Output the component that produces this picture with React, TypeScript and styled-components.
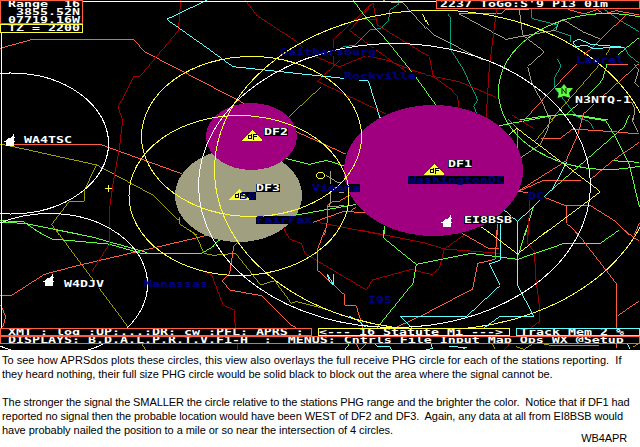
import React from 'react';
import styled, { createGlobalStyle } from 'styled-components';

const Global = createGlobalStyle`
  body { margin: 0; background: #fff; overflow: hidden; }
`;

const C = {
  coral: '#ff5f40',
  maroon: '#9c0000',
  cyan: '#5fffff',
  green: '#5fff40',
  yellow: '#ffff40',
  olive: '#a09f00',
  teal: '#009f80',
  gray: '#a09f80',
  purple: '#a00080',
  navy: '#000080',
  white: '#ffffff',
};
type Ink = keyof typeof C;

const Page = styled.main`
  width: 640px;
  height: 447px;
  display: flex;
  flex-direction: column;
  overflow: hidden;
  background: #fff;
`;

const Screen = styled.section`
  position: relative;
  flex: 0 0 350px;
  display: flex;
  flex-direction: column;
  justify-content: space-between;
  overflow: hidden;
  background: #000;
`;

const MapLayer = styled.svg`
  position: absolute;
  inset: 0;
  display: block;
`;

const TopBar = styled.header`
  position: relative;
  display: flex;
  justify-content: space-between;
  align-items: flex-start;
`;

const Frame = styled.div<{ $ink: Ink; $w?: number; $h: number; $pad?: number }>`
  box-sizing: border-box;
  ${p => (p.$w ? `width: ${p.$w}px;` : 'flex: 1;')}
  height: ${p => p.$h}px;
  padding-left: ${p => p.$pad ?? 0}px;
  border: 1px solid ${p => C[p.$ink]};
  background: #000;
  overflow: hidden;
`;

const Readout = styled.div`
  display: flex;
  flex-direction: column;
`;

const DosText = styled.div`
  height: 8px;
  font: bold 13.29px/8px 'DejaVu Sans Mono', monospace;
  color: #fff;
  white-space: pre;
  transform: translateY(-1px) scaleY(0.72);
  transform-origin: 0 50%;
`;

const BarText = styled(DosText)`
  transform: translateY(-0.4px) scaleY(0.64);
`;

const StatusBars = styled.footer`
  position: relative;
  display: flex;
  flex-direction: column;
  padding-bottom: 6px;
`;

const StatusRow = styled.div`
  display: flex;
  justify-content: space-between;
`;

const Caption = styled.section`
  flex: 1;
  display: flex;
  flex-direction: column;
  padding: 3px 0 0 2px;
  font-family: 'Liberation Sans', Arial, sans-serif;
  font-size: 11px;
  line-height: 14px;
  color: #000;
`;

const Line = styled.div<{ $track: number }>`
  height: 14px;
  white-space: pre;
  letter-spacing: ${p => p.$track}px;
`;

const Signature = styled.div`
  align-self: flex-end;
  margin: -6px 13px 0 0;
  letter-spacing: -0.1px;
`;

/* Roads, rivers and boundaries, by map sector. Points count in thirds of a pixel. */
type Sector = { x: number; y: number; traces: [Ink, string][] };

const sectors: Sector[] = [
  { x: 0, y: 0, traces: [
    ['coral', '0,145 95,119 402,119 433,155 642,263'],
    ['maroon', '542,0 535,92 420,229 402,229 354,322 368,360'],
    ['cyan', '622,0 500,58 640,157'],
  ] },
  { x: 213, y: 0, traces: [
    ['maroon', '97,0 132,47 250,124 270,143'],
    ['maroon', '362,200 362,118 480,8 493,75 640,165'],
    ['maroon', '480,8 410,92 580,215'],
    ['maroon', '425,58 493,58'],
    ['maroon', '300,167 380,200 460,167 520,180 610,215 640,223'],
    ['maroon', '380,182 313,244 520,342'],
    ['teal', '558,0 558,12 530,30 527,60 505,85 470,90 425,135 385,142'],
    ['gray', '510,2 516,2'],
    ['gray', '535,9 570,9 640,87'],
    ['green', '420,0 462,57 520,120 600,220 640,275'],
    ['cyan', '0,157 60,200 466,243 503,360'],
    ['coral', '0,262 95,311'],
    ['olive', '228,350 323,262'],
    ['yellow', '628,42 640,67'],
  ] },
  { x: 426, y: 0, traces: [
    ['teal', '65,42 75,55 75,150 110,205 155,300 143,320 155,345 155,360'],
    ['teal', '317,28 317,55 395,75 380,90 435,108 435,125'],
    ['teal', '395,178 405,200 387,230 387,265 452,350 490,365'],
    ['teal', '535,28 580,60 640,95'],
    ['teal', '595,142 608,165 640,190'],
    ['gray', '225,42 100,42 240,118 390,90 398,65 410,58 470,95 525,118'],
    ['gray', '280,28 290,105 355,155 305,200 318,250 350,310 372,360'],
    ['gray', '225,42 240,28 310,28'],
    ['gray', '0,82 25,105 170,180'],
    ['gray', '625,193 638,210 626,250 640,260'],
    ['gray', '615,305 627,325 622,360'],
    ['maroon', '212,28 190,200 180,360'],
    ['maroon', '0,162 10,170 22,230 75,268 95,290 98,322'],
    ['maroon', '0,225 100,245 210,292'],
    ['yellow', '0,60 8,75'],
    ['coral', '425,28 475,42 515,28 530,42 570,32 640,45'],
    ['coral', '603,42 475,165'],
    ['coral', '452,192 342,308 295,360'],
    ['coral', '542,193 606,195'],
    ['coral', '640,190 472,342 466,360'],
    ['olive', '553,143 540,165'],
    ['olive', '520,195 375,360'],
    ['green', '640,112 575,165'],
    ['green', '543,193 529,240 492,280 422,342'],
    ['cyan', '440,125 460,118 495,133 595,142 500,145 480,135 450,140 440,125'],
    ['green', '280,360 342,350 430,342 545,360'],
    ['green', '0,275 30,315'],
  ] },
  { x: 0, y: 115, traces: [
    ['coral', '40,88 300,88 545,176'],
    ['olive', '0,87 40,95 290,150 462,242 535,315 540,305 540,328 590,360'],
    ['olive', '290,150 253,225 253,259 208,259 155,328 178,360'],
    ['maroon', '364,0 368,15 358,100 340,200 330,270 328,360'],
    ['green', '0,317 70,320 130,360'],
    ['green', '0,322 75,325 240,358'],
    ['yellow', '314,220 337,220'],
    ['yellow', '325,209 325,232'],
  ] },
  { x: 213, y: 115, traces: [
    ['coral', '250,50 400,118'],
    ['green', '218,130 290,148 340,136 400,155'],
    ['green', '250,300 430,268'],
    ['maroon', '320,323 500,358'],
    ['maroon', '212,335 222,360'],
    ['coral', '300,322 390,290 455,292'],
    ['coral', '410,290 430,275'],
    ['coral', '335,360 343,320 343,272 360,260 380,258 410,240'],
    ['gray', '353,167 353,260 347,275 392,272'],
    ['gray', '340,182 375,203 385,203'],
    ['gray', '378,232 392,232'],
    ['green', '515,333 515,360'],
    ['cyan', '497,0 503,8'],
  ] },
  { x: 426, y: 115, traces: [
    ['green', '220,32 390,0'],
    ['green', '440,0 540,18 565,60 610,150 640,275'],
    ['green', '610,0 595,35 380,222'],
    ['green', '560,137 640,142'],
    ['green', '322,275 297,360'],
    ['olive', '390,2 328,78'],
    ['gray', '375,0 365,45 342,90 285,128'],
    ['gray', '622,0 620,20 635,50'],
    ['maroon', '258,0 325,42'],
    ['maroon', '310,255 308,360'],
    ['teal', '455,5 490,20 503,42'],
    ['coral', '275,100 275,42 245,12'],
    ['coral', '345,70 403,70 440,42 560,50 640,57'],
    ['coral', '472,0 455,60 420,138 275,230 350,197 465,197'],
    ['coral', '275,230 305,232'],
    ['coral', '495,192 560,137 640,82'],
    ['coral', '358,248 420,273 495,273 570,320 610,360'],
    ['coral', '422,273 422,325 460,360'],
    ['coral', '640,325 625,360'],
    ['coral', '214,325 214,360'],
    ['yellow', '250,58 273,40 523,230 350,360'],
    ['yellow', '165,335 200,360'],
    ['cyan', '422,140 380,222 355,245'],
    ['cyan', '342,255 275,320 235,285'],
    ['cyan', '275,320 275,360'],
    ['cyan', '223,325 223,360'],
  ] },
  { x: 0, y: 230, traces: [
    ['coral', '0,196 35,196 133,133 240,105 622,16'],
    ['coral', '2,225 17,260 8,292'],
    ['olive', '168,0 385,292'],
    ['green', '105,0 155,27 325,42 425,70 605,70 642,48'],
    ['green', '170,0 280,22 440,67'],
    ['maroon', '328,0 328,42 277,123'],
    ['maroon', '600,118 635,135 640,145'],
    ['olive', '570,0 590,20 612,70 640,76'],
    ['olive', '425,340 437,360'],
  ] },
  { x: 213, y: 230, traces: [
    ['maroon', '215,0 230,28 265,40 275,70 460,180 478,150 595,118 640,130'],
    ['maroon', '440,0 640,40'],
    ['maroon', '0,145 30,225 63,240 67,293'],
    ['maroon', '73,343 73,360'],
    ['coral', '75,35 62,50 50,130 28,152 50,180 145,197 235,285 250,293'],
    ['coral', '335,0 313,60 313,120 395,195 395,226 430,228 447,285 450,300'],
    ['coral', '548,293 640,250'],
    ['olive', '0,76 68,70 143,165 185,152 235,220 250,215 330,235'],
    ['cyan', '343,132 362,165 362,132'],
    ['cyan', '343,135 350,155 362,165'],
    ['cyan', '640,259 562,259 597,293'],
    ['cyan', '408,258 440,275 460,293'],
    ['green', '20,30 0,47'],
    ['green', '512,0 513,25 610,103 640,97'],
    ['green', '610,103 600,160 515,265 492,293'],
    ['green', '408,343 395,360'],
    ['coral', '430,342 440,360 460,342'],
    ['cyan', '485,342 495,350 532,350 535,360'],
  ] },
  { x: 426, y: 230, traces: [
    ['maroon', '0,40 55,57 222,70'],
    ['maroon', '118,12 55,57 40,115 20,133 0,130'],
    ['maroon', '305,0 305,40 325,65 330,150 340,225 340,275 315,293'],
    ['green', '0,97 135,70 275,88 415,40 523,40 580,0'],
    ['green', '300,0 277,75'],
    ['coral', '105,8 187,55 220,55'],
    ['coral', '213,0 208,88 155,100 140,177 0,250'],
    ['coral', '443,0 470,30 572,162 572,293'],
    ['coral', '595,0 630,28 640,32'],
    ['coral', '640,213 575,257'],
    ['cyan', '223,0 223,90 190,102 223,166 122,259 0,259'],
    ['cyan', '275,0 275,166 323,259 222,259 175,293'],
    ['yellow', '180,0 275,72 367,0'],
    ['cyan', '15,342 20,355 0,360'],
    ['cyan', '70,350 122,352 110,358'],
    ['olive', '200,342 208,358'],
    ['maroon', '250,342 235,360'],
    ['olive', '318,343 295,358 270,350'],
    ['olive', '355,342 385,348 520,348'],
    ['coral', '572,342 572,355'],
    ['cyan', '605,342 612,356'],
    ['olive', '620,352 635,342'],
  ] },
];

type Ring = [Ink, number, number, number, number];
const disks: Ring[] = [
  ['gray', 238.5, 195.5, 63.5, 46.5],
  ['purple', 251.5, 136.5, 45.5, 33.5],
  ['purple', 433.5, 170.5, 89.5, 65.5],
];
const rings: Ring[] = [
  ['white', 10.5, 143.5, 98, 70.5],
  ['white', 49.5, 284.5, 98, 71],
  ['white', 394.5, 185.5, 196, 142],
  ['green', 607.5, 91.5, 109, 78],
  ['yellow', 251.5, 136.5, 110, 80],
  ['yellow', 239, 195.5, 110, 80],
  ['yellow', 434.5, 170, 220, 160],
  ['yellow', 320.5, 175.5, 4, 3],
];

const labels: { t: string; x: number; y: number; ink?: Ink }[] = [
  { t: 'Gaithersburg', x: 280, y: 55, ink: 'navy' },
  { t: 'Rockville', x: 344, y: 79, ink: 'navy' },
  { t: 'Laurel', x: 576, y: 63, ink: 'navy' },
  { t: 'Vienna', x: 312, y: 191, ink: 'navy' },
  { t: '50', x: 240, y: 199, ink: 'navy' },
  { t: 'FairFax', x: 256, y: 223, ink: 'navy' },
  { t: 'WashingtonDC', x: 408, y: 183, ink: 'navy' },
  { t: 'DC', x: 528, y: 199, ink: 'navy' },
  { t: 'Manassas', x: 144, y: 287, ink: 'navy' },
  { t: 'I95', x: 368, y: 303, ink: 'navy' },
  { t: 'WA4TSC', x: 24, y: 143 },
  { t: 'W4DJV', x: 64, y: 287 },
  { t: 'DF2', x: 264, y: 135 },
  { t: 'DF3', x: 256, y: 191 },
  { t: 'DF1', x: 448, y: 167 },
  { t: 'EI8BSB', x: 464, y: 223 },
  { t: 'N3NTQ-1', x: 575, y: 103 },
];

const MapLabel = styled.text`
  font: bold 13.29px 'DejaVu Sans Mono', monospace;
`;

const Finder = ({ x, y }: { x: number; y: number }) => (
  <g transform={`translate(${x} ${y})`} shapeRendering="crispEdges">
    <path d="M0 -5.5 L10 5 H-10 Z" fill={C.yellow} />
    <path d="M-1 -2 V3 H-4 V0 H-1 M1 4 V-1 H4 M1 1 H4" fill="none" stroke="#000" />
  </g>
);

const Home = ({ x, y }: { x: number; y: number }) => (
  <path
    transform={`translate(${x} ${y})`}
    shapeRendering="crispEdges"
    fill="#fff"
    d="M-4 5 V1 H-6 V0 H-4 V-1 H-3 V-2 H-2 V-3 H1 V-4 H2 V-5 H3 V-7 H4 V-4 H5 V-3 H4 V0 H5 V1 H4 V5 Z"
  />
);

const SituationMap = () => (
  <MapLayer width="640" height="350" viewBox="0 0 640 350">
    {sectors.map((s, i) => (
      <g key={i} transform={`translate(${s.x} ${s.y}) scale(.33333)`} fill="none" strokeWidth="3" shapeRendering="crispEdges">
        {s.traces.map(([ink, pts], k) => <polyline key={k} points={pts} stroke={C[ink]} />)}
      </g>
    ))}
    <g shapeRendering="crispEdges">
      {disks.map(([ink, cx, cy, rx, ry], i) => <ellipse key={i} {...{ cx, cy, rx, ry }} fill={C[ink]} />)}
      {labels.map(l => (
        <rect key={l.t} x={l.x} y={l.y - 7} width={l.t.length * 8} height="8" fill="#000" />
      ))}
      {rings.map(([ink, cx, cy, rx, ry], i) => <ellipse key={i} {...{ cx, cy, rx, ry }} fill="none" stroke={C[ink]} />)}
      <path d="M1.5 335 V1.5 H437" fill="none" stroke="#fff" />
    </g>
    <Finder x={252.5} y={135.5} />
    <Finder x={239.5} y={194.5} />
    <Finder x={434.5} y={169.5} />
    <Home x={10} y={141} />
    <Home x={49} y={281} />
    <Home x={447} y={222} />
    <path d="M564 84 L567 88 H573 L569 93 L570.5 98 L564 96 L557.5 98 L559 93 L555 88 H561 Z" fill={C.green} />
    <path d="M562 94 V88.5 L566 93.5 V88" fill="none" stroke="#000" />
    {labels.map(l => (
      <MapLabel key={l.t} transform={`translate(${l.x} ${l.y}) scale(1 .72)`} fill={C[l.ink ?? 'white']}>{l.t}</MapLabel>
    ))}
  </MapLayer>
);

const notes: [string, number][] = [
  ['To see how APRSdos plots these circles, this view also overlays the full receive PHG circle for each of the stations reporting.  If', 0.015],
  ['they heard nothing, their full size PHG circle would be solid black to block out the area where the signal cannot be.', -0.045],
  ['', 0],
  ['The stronger the signal the SMALLER the circle relative to the stations PHG range and the brighter the color.  Notice that if DF1 had', -0.1],
  ['reported no signal then the probable location would have been WEST of DF2 and DF3.  Again, any data at all from EI8BSB would', -0.07],
  ['have probably nailed the position to a mile or so near the intersection of 4 circles.', -0.04],
];

export default function App() {
  return (
    <Page>
      <Global />
      <Screen>
        <SituationMap />
        <TopBar>
          <Readout>
            <Frame $ink="coral" $w={83} $h={24} $pad={7}>
              <DosText>Range  16</DosText>
              <DosText> 3855.52N</DosText>
              <DosText>07719.16W</DosText>
            </Frame>
            <Frame $ink="yellow" $w={83} $h={9} $pad={7}>
              <BarText>TZ = 2200</BarText>
            </Frame>
          </Readout>
          <Frame $ink="coral" $w={204} $h={9} $pad={3}>
            <BarText>2237 ToGo:S'9 P13 01m</BarText>
          </Frame>
        </TopBar>
        <StatusBars>
          <StatusRow>
            <Frame $ink="coral" $w={312} $h={8} $pad={7}>
              <BarText>XMT : log :UP:...:DR: cw :PFL: APRS :</BarText>
            </Frame>
            <Frame $ink="yellow" $w={192} $h={8}>
              <BarText>{'<--- 16 Statute Mi --->'}</BarText>
            </Frame>
            <Frame $ink="cyan" $w={124} $h={8} $pad={3}>
              <BarText>Track Mem 2 %</BarText>
            </Frame>
          </StatusRow>
          <StatusRow>
            <Frame $ink="coral" $h={8} $pad={7}>
              <BarText>DISPLAYS: B.D.A.L.P.R.T.V.F1-H  :  MENUS: Cntrls File Input Map Ops WX @Setup</BarText>
            </Frame>
          </StatusRow>
        </StatusBars>
      </Screen>
      <Caption>
        {notes.map(([text, track], i) => <Line key={i} $track={track}>{text}</Line>)}
        <Signature>WB4APR</Signature>
      </Caption>
    </Page>
  );
}
